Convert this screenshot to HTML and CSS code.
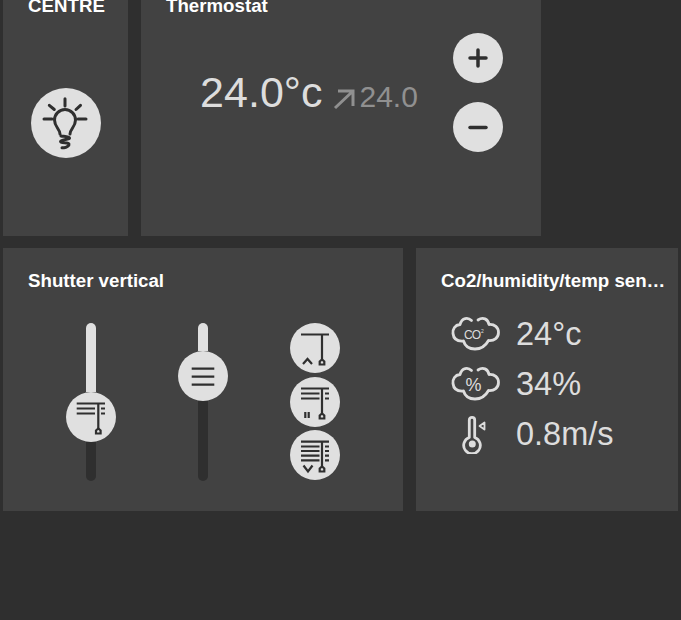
FILE: index.html
```html
<!DOCTYPE html>
<html lang="en">
<head>
    <meta charset="UTF-8">
    <title>Dashboard</title>
    <link rel="stylesheet" href="styles.css">
</head>
<body>

    <div class="dashboard">

        <div class="row row-top">
            <!-- LIGHT -->
            <div class="card card-light">
                <div class="card-title card-title-center">CENTRE</div>
                <div class="light-body">
                    <button class="round round-big">
                        <svg viewBox="0 0 70 70" width="70" height="70" class="ico">
                            <path d="M34 10.700V18M13 31h8M47 31h8M18.300 17.300l5 4.200M49.500 17.300l-4.500 4.200" />
                            <path d="M29 46c0-5-5.500-7-5.500-14a10.500 10.500 0 0 1 21 0c0 7-5.500 9-5.500 14" />
                            <path d="M30 48c3 .5 8 .5 8.500 2s-9 1.500-9 3.500 8 .5 8.500 2.500-3 3.500-5 3.800h-2" />
                        </svg>
                    </button>
                </div>
            </div>

            <!-- THERMOSTAT -->
            <div class="card card-thermostat">
                <div class="card-title">Thermostat</div>
                <div class="thermo-body">
                    <div class="thermo-values">
                        <span class="temp-current">24.0°c</span>
                        <svg class="temp-arrow" viewBox="0 0 22 22" width="22" height="22">
                            <path d="M2 20L20 3M5 3h15v15" />
                        </svg>
                        <span class="temp-target">24.0</span>
                    </div>
                    <div class="thermo-buttons">
                        <button class="round">
                            <svg viewBox="0 0 50 50" width="50" height="50" class="ico ico-bold">
                                <path d="M17 25h16M25 17v16" />
                            </svg>
                        </button>
                        <button class="round">
                            <svg viewBox="0 0 50 50" width="50" height="50" class="ico ico-bold">
                                <path d="M17 25.500h16" />
                            </svg>
                        </button>
                    </div>
                </div>
            </div>
        </div>

        <div class="row">
            <!-- SHUTTER -->
            <div class="card card-shutter">
                <div class="card-title">Shutter vertical</div>
                <div class="shutter-body">
                    <div class="slider">
                        <div class="track"><div class="fill" style="height: 69px"></div></div>
                        <button class="round handle" style="top: 69px">
                            <svg viewBox="0 0 50 50" width="50" height="50" class="ico ico-thin">
                                <path d="M10.700 11.500H39M32.300 11.500V37M10.700 16.500H29M35 16.500h4M10.700 21.500H29M35 21.500h4" />
                                <path d="M30 38.500l2.300-2 2.300 2v3h-4.600z" />
                            </svg>
                        </button>
                    </div>
                    <div class="slider">
                        <div class="track"><div class="fill" style="height: 28px"></div></div>
                        <button class="round handle" style="top: 28px">
                            <svg viewBox="0 0 50 50" width="50" height="50" class="ico ico-thin">
                                <path d="M13.700 17.700h22.600M13.700 25.700h22.600M13.700 33.700h22.600" />
                            </svg>
                        </button>
                    </div>
                    <div class="shutter-buttons">
                        <button class="round">
                            <svg viewBox="0 0 50 50" width="50" height="50" class="ico ico-thin">
                                <path d="M11 11.500h28M32 11.500V37" />
                                <path d="M29.700 38.500l2.300-2 2.300 2v3h-4.600z" />
                                <path d="M13 41l4.500-5 4.500 5" />
                            </svg>
                        </button>
                        <button class="round">
                            <svg viewBox="0 0 50 50" width="50" height="50" class="ico ico-thin">
                                <path d="M11 11.500h28M32 11.500V37M11 16.500h18.500M35 16.500h4M11 21.500h18.500M35 21.500h4" />
                                <path d="M29.700 38.500l2.300-2 2.300 2v3h-4.600z" />
                                <path d="M15.300 35v6M18.700 35v6" />
                            </svg>
                        </button>
                        <button class="round">
                            <svg viewBox="0 0 50 50" width="50" height="50" class="ico ico-thin">
                                <path d="M11 11.700h28M32 11.700V37M11 16.500h18.500M35 16.500h4M11 21h18.500M35 21h4M11 25.700h18.500M35 25.700h4M11 30.300h18.500M35 30.300h4" />
                                <path d="M29.700 38.500l2.300-2 2.300 2v3h-4.600z" />
                                <path d="M13.500 35.500l4.500 6 4.500-6" />
                            </svg>
                        </button>
                    </div>
                </div>
            </div>

            <!-- SENSOR -->
            <div class="card card-sensor">
                <div class="card-title">Co2/humidity/temp sensor</div>
                <div class="sensor-list">
                    <div class="sensor-row">
                        <svg class="sensor-ico" viewBox="0 0 54 40" width="54" height="40">
                            <path class="cloud" d="M23.500 6.500C20 3 14 3.500 12 10.500 7 11 4.500 15 5 19.500c.5 5 4 8 10.500 7.500 1.500 5 5.500 8 11.500 8s10.500-3 13.500-8.500c6 .5 10-3 10-8 0-5-4-8.500-9.500-8C40 5 35 2.500 30 6" />
                            <text class="cloud-text" x="16" y="25">CO<tspan class="cloud-sup" dx="1" dy="-6">2</tspan></text>
                        </svg>
                        <span class="sensor-value">24°c</span>
                    </div>
                    <div class="sensor-row">
                        <svg class="sensor-ico" viewBox="0 0 54 40" width="54" height="40">
                            <path class="cloud" d="M23.500 6.500C20 3 14 3.500 12 10.500 7 11 4.500 15 5 19.500c.5 5 4 8 10.500 7.500 1.500 5 5.500 8 11.500 8s10.500-3 13.500-8.500c6 .5 10-3 10-8 0-5-4-8.500-9.500-8C40 5 35 2.500 30 6" />
                            <text class="cloud-text cloud-text-big" x="17.500" y="26.500">%</text>
                        </svg>
                        <span class="sensor-value">34%</span>
                    </div>
                    <div class="sensor-row">
                        <svg class="sensor-ico" viewBox="0 0 54 40" width="54" height="40">
                            <path class="cloud" d="M21.300 23.500V6a2.700 2.700 0 0 1 5.400 0v17.500a8.300 8.300 0 1 1-5.400 0z" />
                            <circle class="cloud-fill" cx="24.300" cy="30" r="3.500" />
                            <path class="cloud cloud-thin" d="M31.500 12l5-3.500v7z" />
                        </svg>
                        <span class="sensor-value">0.8m/s</span>
                    </div>
                </div>
            </div>
        </div>

    </div>

</body>
</html>
```

FILE: styles.css
```css
:root {
    --page: #2f2f2f;
    --card: #424242;
    --light: #e0e0e0;
    --dark: #2f2f2f;
    --text: #dddddd;
    --muted: #909090;
}

* { margin: 0; padding: 0; box-sizing: border-box; }

html, body {
    height: 620px;
    overflow: hidden;
}

body {
    background: var(--page);
    color: var(--text);
    font-family: "Liberation Sans", Arial, sans-serif;
}

/* the page is scrolled a bit, top row is cut */
.dashboard {
    margin-top: -27px;
    padding: 0 3px;
    display: flex;
    flex-direction: column;
    gap: 12px;
}

.row {
    display: flex;
    gap: 13px;
}

.card {
    display: flex;
    flex-direction: column;
    background: var(--card);
    height: 263px;
}

.card-light { width: 125px; }
.card-thermostat { width: 400px; }
.card-shutter { width: 400px; }
.card-sensor { width: 262px; }

.card-title {
    padding: 21px 13px 0 25px;
    font-size: 18.700px;
    font-weight: bold;
    line-height: 24px;
    color: #ffffff;
    white-space: nowrap;
    overflow: hidden;
    text-overflow: ellipsis;
}

.card-title-center {
    text-align: center;
    padding-left: 15px;
}

.card-sensor .card-title {
    padding-right: 8px;
}

.round {
    display: block;
    width: 50px;
    height: 50px;
    border: 0;
    border-radius: 50%;
    background: var(--light);
}

.round svg {
    display: block;
}

.round-big {
    width: 70px;
    height: 70px;
}

.ico {
    fill: none;
    stroke: var(--dark);
    stroke-width: 3;
    stroke-linecap: round;
    stroke-linejoin: round;
}

.ico-bold { stroke-width: 3.500; }
.ico-thin { stroke-width: 2.200; stroke-linecap: butt; stroke-linejoin: miter; }

.light-body {
    flex: 1;
    display: flex;
    align-items: center;
    justify-content: center;
    padding-bottom: 8px;
}

.thermo-body {
    display: flex;
    align-items: center;
    padding: 15px 38px 0 24px;
}

.thermo-values {
    flex: 1;
    display: flex;
    align-items: baseline;
    justify-content: center;
}

.temp-current {
    font-size: 43px;
    color: var(--text);
}

.temp-arrow {
    align-self: flex-end;
    margin: 0 5px 7px 10px;
    fill: none;
    stroke: var(--muted);
    stroke-width: 3;
}

.temp-target {
    font-size: 30px;
    color: var(--muted);
}

.thermo-buttons {
    display: flex;
    flex-direction: column;
    gap: 19px;
}

.shutter-body {
    display: flex;
    gap: 62px;
    padding: 30px 0 0 63px;
}

.slider {
    position: relative;
    width: 50px;
    height: 158px;
}

.track {
    width: 10px;
    height: 158px;
    margin: 0 auto;
    border-radius: 5px;
    overflow: hidden;
    background: var(--dark);
}

.fill {
    background: var(--light);
}

.handle {
    position: absolute;
    left: 0;
}

.shutter-buttons {
    display: flex;
    flex-direction: column;
    gap: 3.500px;
}

.sensor-list {
    padding: 16px 0 0 32px;
}

.sensor-row {
    display: flex;
    align-items: center;
    gap: 14px;
    height: 50px;
}

.sensor-ico {
    display: block;
    flex: none;
}

.cloud {
    fill: none;
    stroke: var(--text);
    stroke-width: 2.800;
    stroke-linecap: round;
    stroke-linejoin: round;
}

.cloud-thin { stroke-width: 1.800; }

.cloud-fill { fill: var(--text); }

.cloud-text {
    font-size: 12px;
    letter-spacing: -1px;
    fill: var(--text);
}

.cloud-sup { font-size: 5px; letter-spacing: 0; }
.cloud-text-big { font-size: 18px; letter-spacing: 0; }

.sensor-value {
    font-size: 32.500px;
    color: var(--text);
}
```
